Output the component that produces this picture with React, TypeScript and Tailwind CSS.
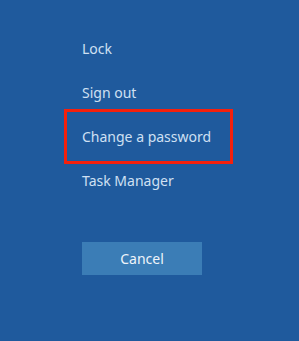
export default function App() {
  return (
    <div className="h-[341px] w-[299px] bg-[#1f5a9d] text-[#cfe0f3] font-['Noto_Sans',sans-serif] text-[14px] pt-[26px] pl-[82px]">
      <div className="flex flex-col">
        <div className="h-[44px] flex items-center">Lock</div>
        <div className="h-[44px] flex items-center">Sign out</div>
        <div className="h-[55px] -my-[5.5px] -ml-[18px] w-[169px] border-[3px] border-[#f5200c] pl-[15px] flex items-center">
          Change a password
        </div>
        <div className="h-[44px] flex items-center">Task Manager</div>
      </div>
      <button className="mt-[40px] w-[120px] h-[33px] bg-[#3b7db6] text-[#eef4fa] text-[14px] flex items-center justify-center">
        Cancel
      </button>
    </div>
  );
}
